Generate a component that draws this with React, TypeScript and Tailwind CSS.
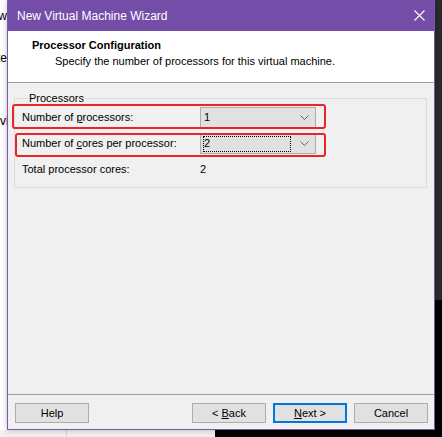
import React from "react";

function Chevron() {
  return (
    <svg width="9" height="5" viewBox="0 0 9 5" className="shrink-0">
      <path d="M0.5 0.5 L4.5 4.5 L8.5 0.5" fill="none" stroke="#606060" strokeWidth="1" />
    </svg>
  );
}

function Combo({ value, focused }: { value: string; focused?: boolean }) {
  return (
    <div className="w-[116px] h-[21px] bg-[#e1e1e1] border border-[#adadad] flex items-center pl-[2px] pr-[6px]">
      <div
        className={`flex-1 h-[16px] flex items-center pl-[1px] mr-[9px] ${focused ? "outline-1 outline-dotted outline-black -outline-offset-1" : ""}`}
      >
        {value}
      </div>
      <Chevron />
    </div>
  );
}

function Button({
  children,
  primary,
}: {
  children: React.ReactNode;
  primary?: boolean;
}) {
  return (
    <button
      className={`w-[74px] h-[20px] bg-[#e1e1e1] flex items-center justify-center leading-none ${primary ? "border-2 border-[#0078d7]" : "border border-[#adadad]"}`}
    >
      {children}
    </button>
  );
}

export default function App() {
  return (
    <div className="relative w-[442px] h-[437px] overflow-hidden bg-[#f4f4f4] text-[11px] text-black font-['Liberation_Sans',Arial,sans-serif]">
      {/* desktop behind the wizard */}
      <div className="absolute left-0 top-0 w-[7px] h-[437px] bg-white text-[12px]">
        <div className="absolute left-0 top-[7px] w-[7px] flex justify-end overflow-hidden whitespace-nowrap">
          New
        </div>
        <div className="absolute left-0 top-[49px] w-[7px] flex justify-end overflow-hidden whitespace-nowrap">
          Crete
        </div>
        <div className="absolute left-0 top-[112px] w-[7px] overflow-hidden whitespace-nowrap">
          vi
        </div>
      </div>
      <div className="absolute right-0 top-0 w-[7px] h-[300px] bg-[#2b2b2b]" />
      <div className="absolute right-0 top-[300px] w-[7px] h-[137px] bg-black" />
      <div className="absolute left-0 bottom-0 w-[442px] h-[7px] flex">
        <div className="w-[67px] bg-[#f0f0f0] border-r border-[#d4d4d4]" />
        <div className="w-[148px] bg-[#f0f0f0]" />
        <div className="flex-1 bg-black" />
      </div>

      {/* wizard window */}
      <div className="absolute left-[7px] top-0 w-[428px] h-[430px] flex flex-col bg-[#f0f0f0] border border-t-0 border-[#7a55b2] shadow-[0_0_6px_rgba(0,0,0,0.25)]">
        <div className="h-[31px] bg-[#744da9] flex items-center justify-between pl-[9px] pr-[9px] text-white text-[12px]">
          <span>New Virtual Machine Wizard</span>
          <svg width="11" height="11" viewBox="0 0 11 11">
            <path d="M0.5 0.5 L10.5 10.5 M10.5 0.5 L0.5 10.5" stroke="#ffffff" strokeWidth="1.1" />
          </svg>
        </div>

        <div className="h-[52px] bg-white border-b border-[#a0a0a0] pl-[24px] pt-[6px] leading-[16px]">
          <div className="font-bold">Processor Configuration</div>
          <div className="pl-[23px]">Specify the number of processors for this virtual machine.</div>
        </div>

        <div className="flex-1 relative">
          <fieldset className="mt-[7px] ml-[6px] mr-[7px] h-[98px] border border-[#dcdcdc] pl-[7px]">
            <legend className="ml-[7px] px-0 leading-[16px]">Processors</legend>
            <div className="flex flex-col gap-[5px] pt-[1px]">
              <div className="flex items-center h-[21px]">
                <span className="w-[178px]">
                  Number of <span className="underline">p</span>rocessors:
                </span>
                <Combo value="1" />
              </div>
              <div className="flex items-center h-[21px]">
                <span className="w-[178px]">
                  Number of <span className="underline">c</span>ores per processor:
                </span>
                <Combo value="2" focused />
              </div>
              <div className="flex items-center h-[21px]">
                <span className="w-[178px]">Total processor cores:</span>
                <span>2</span>
              </div>
            </div>
          </fieldset>

          {/* annotation boxes */}
          <div className="absolute left-[4px] top-[21px] w-[314px] h-[25px] border-2 border-[#e8262a] rounded-[3px]" />
          <div className="absolute left-[7px] top-[50px] w-[311px] h-[24px] border-2 border-[#e8262a] rounded-[3px]" />
        </div>

        <div className="border-t border-[#a0a0a0] flex items-center justify-between pl-[7px] pr-[6px] pt-[8px] pb-[6px]">
          <Button>Help</Button>
          <div className="flex gap-[7px]">
            <Button>
              &lt;&nbsp;<span className="underline">B</span>ack
            </Button>
            <Button primary>
              <span className="underline">N</span>ext&nbsp;&gt;
            </Button>
            <Button>Cancel</Button>
          </div>
        </div>
      </div>
    </div>
  );
}
